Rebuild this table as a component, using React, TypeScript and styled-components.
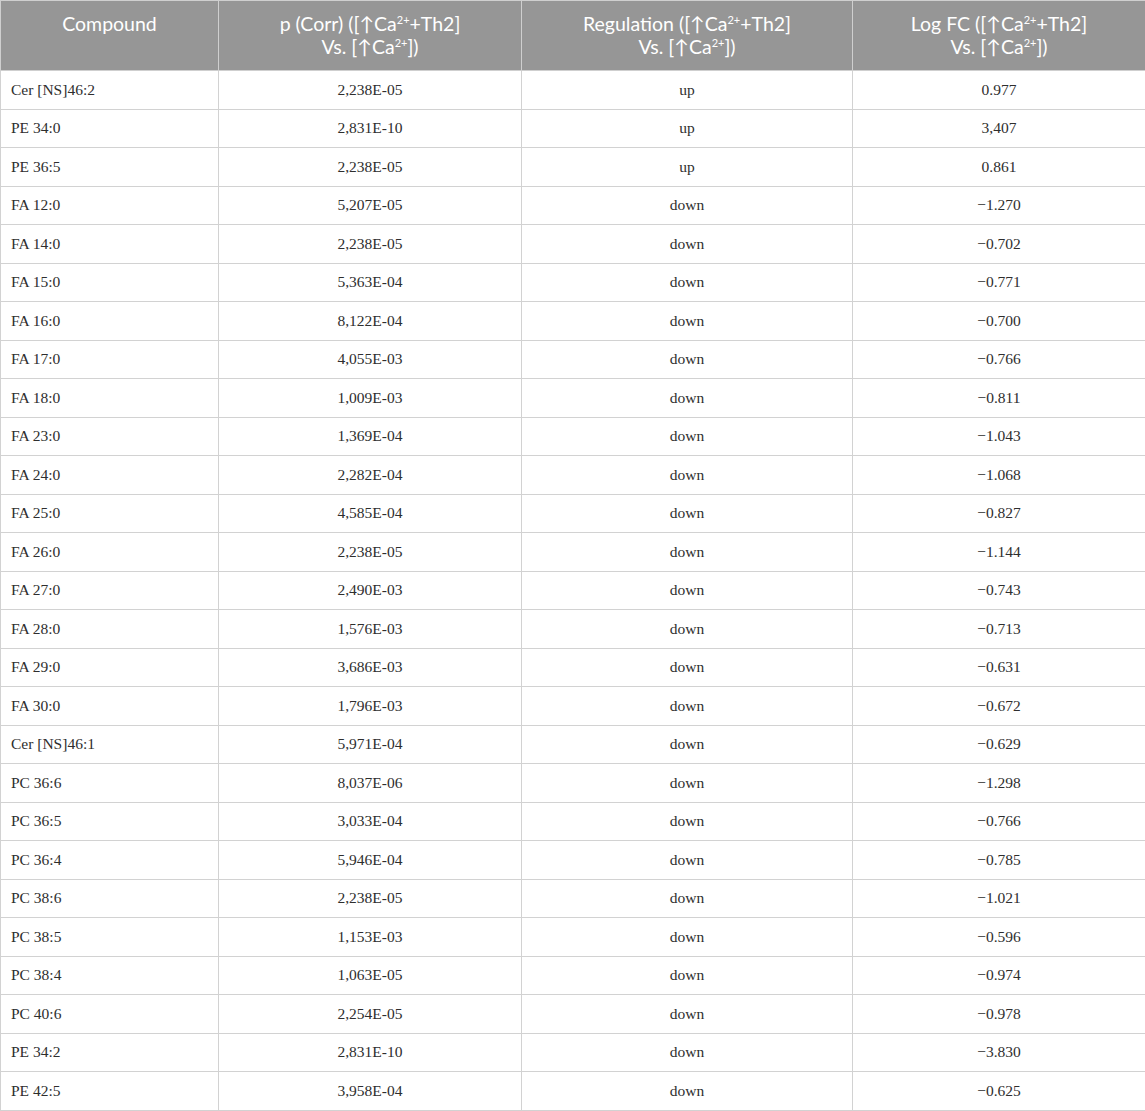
import React from "react";
import styled, { createGlobalStyle } from "styled-components";

const Global = createGlobalStyle`
  html, body { margin: 0; padding: 0; background: #ffffff; }
`;

const Table = styled.table`
  width: 1145px;
  table-layout: fixed;
  border-collapse: collapse;
  border: 1px solid #cfcfcf;
`;

const HeadCell = styled.th`
  background: #969696;
  color: #ffffff;
  font-family: Lato, "Open Sans", sans-serif;
  font-weight: 400;
  font-size: 19.5px;
  line-height: 23.4px;
  text-align: center;
  vertical-align: top;
  height: 70px;
  padding: 11px 6px 0;
  box-sizing: border-box;
  border: 1px solid #cfcfcf;
  border-top: none;
`;

const Sup = styled.sup`
  font-size: 11px;
  line-height: 1;
  vertical-align: 7px;
`;

const Row = styled.tr`
  height: 38.5px;
`;

const Cell = styled.td<{ $align?: "left" | "center" }>`
  font-family: "Liberation Serif", "Times New Roman", serif;
  font-size: 15.5px;
  color: #2e2e2e;
  text-align: ${(p) => p.$align ?? "center"};
  padding: 0 10px;
  border: 1px solid #d2d2d2;
  vertical-align: middle;
`;

type R = [string, string, string, string];

const rows: R[] = [
  ["Cer [NS]46:2", "2,238E-05", "up", "0.977"],
  ["PE 34:0", "2,831E-10", "up", "3,407"],
  ["PE 36:5", "2,238E-05", "up", "0.861"],
  ["FA 12:0", "5,207E-05", "down", "\u22121.270"],
  ["FA 14:0", "2,238E-05", "down", "\u22120.702"],
  ["FA 15:0", "5,363E-04", "down", "\u22120.771"],
  ["FA 16:0", "8,122E-04", "down", "\u22120.700"],
  ["FA 17:0", "4,055E-03", "down", "\u22120.766"],
  ["FA 18:0", "1,009E-03", "down", "\u22120.811"],
  ["FA 23:0", "1,369E-04", "down", "\u22121.043"],
  ["FA 24:0", "2,282E-04", "down", "\u22121.068"],
  ["FA 25:0", "4,585E-04", "down", "\u22120.827"],
  ["FA 26:0", "2,238E-05", "down", "\u22121.144"],
  ["FA 27:0", "2,490E-03", "down", "\u22120.743"],
  ["FA 28:0", "1,576E-03", "down", "\u22120.713"],
  ["FA 29:0", "3,686E-03", "down", "\u22120.631"],
  ["FA 30:0", "1,796E-03", "down", "\u22120.672"],
  ["Cer [NS]46:1", "5,971E-04", "down", "\u22120.629"],
  ["PC 36:6", "8,037E-06", "down", "\u22121.298"],
  ["PC 36:5", "3,033E-04", "down", "\u22120.766"],
  ["PC 36:4", "5,946E-04", "down", "\u22120.785"],
  ["PC 38:6", "2,238E-05", "down", "\u22121.021"],
  ["PC 38:5", "1,153E-03", "down", "\u22120.596"],
  ["PC 38:4", "1,063E-05", "down", "\u22120.974"],
  ["PC 40:6", "2,254E-05", "down", "\u22120.978"],
  ["PE 34:2", "2,831E-10", "down", "\u22123.830"],
  ["PE 42:5", "3,958E-04", "down", "\u22120.625"],
];

const Ca = () => (
  <>
    [↑Ca<Sup>2+</Sup>
  </>
);

export default function App() {
  return (
    <>
      <Global />
      <Table>
        <colgroup>
          <col style={{ width: 218 }} />
          <col style={{ width: 303 }} />
          <col style={{ width: 331 }} />
          <col style={{ width: 293 }} />
        </colgroup>
        <thead>
          <tr>
            <HeadCell>Compound</HeadCell>
            <HeadCell>
              p (Corr) (<Ca />+Th2]
              <br />
              Vs. <Ca />])
            </HeadCell>
            <HeadCell>
              Regulation (<Ca />+Th2]
              <br />
              Vs. <Ca />])
            </HeadCell>
            <HeadCell>
              Log FC (<Ca />+Th2]
              <br />
              Vs. <Ca />])
            </HeadCell>
          </tr>
        </thead>
        <tbody>
          {rows.map((r) => (
            <Row key={r[0]}>
              <Cell $align="left">{r[0]}</Cell>
              <Cell>{r[1]}</Cell>
              <Cell>{r[2]}</Cell>
              <Cell>{r[3]}</Cell>
            </Row>
          ))}
        </tbody>
      </Table>
    </>
  );
}
